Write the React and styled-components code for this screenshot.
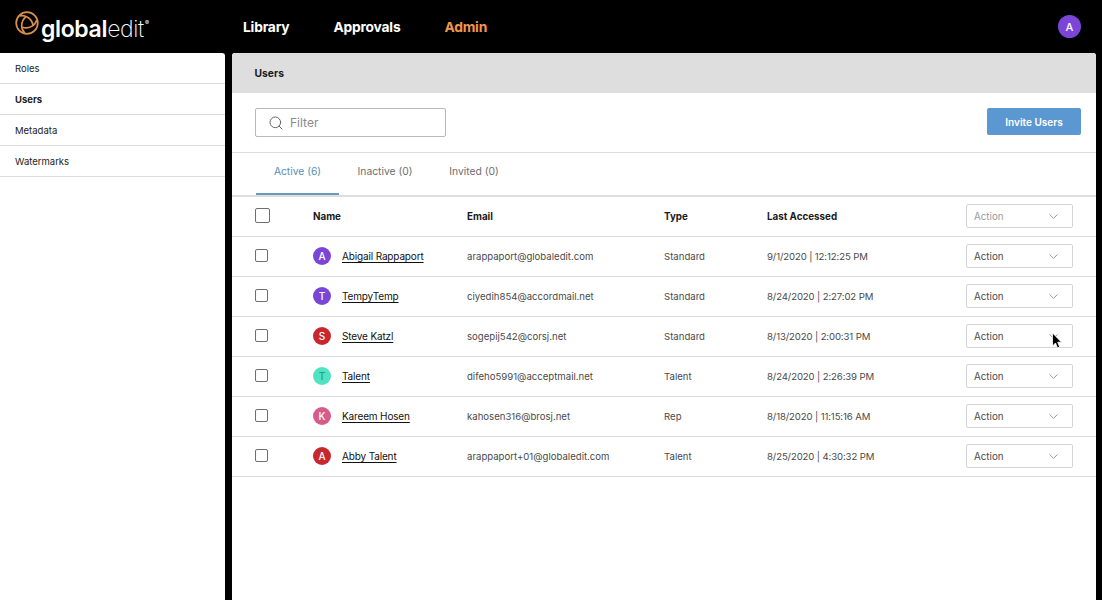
import React from 'react';
import styled, { createGlobalStyle } from 'styled-components';
import { Search, ChevronDown } from 'lucide-react';

const Global = createGlobalStyle`
  html, body { margin: 0; padding: 0; background: #000; height: 100%; overflow: hidden; }
  * { box-sizing: border-box; }
  body { font-family: Inter, "Liberation Sans", sans-serif; color: #1c1c1c; }
`;
const Page = styled.div`width: 1102px; height: 600px; display: flex; flex-direction: column; background: #000; position: relative; overflow: hidden;`;
const Header = styled.header`height: 53px; flex: none; display: flex; align-items: center; padding: 0 21px 0 15px;`;
const Logo = styled.div`width: 228px; flex: none; position: relative; height: 53px; display: flex; align-items: flex-end;`;
const LogoText = styled.div`
  font-family: Inter, sans-serif; font-size: 23px; color: #fff; letter-spacing: -0.35px; line-height: 1;
  margin: 0 0 12px 26px; font-weight: 600;
  span { font-weight: 200; }
  sup { font-size: 6px; font-weight: 400; vertical-align: 12px; line-height: 0; margin-left: 1px; }
`;
const LogoMark = styled.svg`position: absolute; left: 0; top: 11px;`;
const Nav = styled.nav`display: flex; gap: 44px; flex: 1; padding-top: 1px;`;
const NavItem = styled.a`font-size: 13.8px; font-weight: 700; letter-spacing: -0.2px; color: ${p => p.$active ? '#f0974f' : '#fff'};`;
const Avatar = styled.div`
  width: ${p => p.$size || 18}px; height: ${p => p.$size || 18}px; border-radius: 50%; background: ${p => p.$color};
  color: ${p => p.$text || '#fff'}; display: flex; align-items: center; justify-content: center; font-size: ${p => p.$fs || 10}px; font-weight: 500; flex: none;
`;
const Body = styled.div`flex: 1; display: flex; gap: 7px; min-height: 0; padding-right: 6px;`;
const Sidebar = styled.aside`width: 225px; flex: none; background: #fff; border-radius: 0 3px 0 0;`;
const SideItem = styled.div`
  height: 31px; padding: 0 15px; display: flex; align-items: center; border-bottom: 1px solid #dcdcdc;
  font-size: 9.5px; color: #222; font-weight: ${p => p.$active ? 700 : 400};
`;
const Main = styled.main`flex: 1; background: #fff; border-radius: 3px 3px 0 0; display: flex; flex-direction: column; overflow: hidden;`;
const TitleBar = styled.div`height: 40px; flex: none; background: #dedede; display: flex; align-items: center; padding: 0 22.5px; font-size: 10.3px; font-weight: 700; color: #1a1a1a;`;
const Toolbar = styled.div`height: 60px; flex: none; display: flex; align-items: flex-start; justify-content: space-between; padding: 15px 15px 0 23px; border-bottom: 1px solid #dcdcdc;`;
const FilterBox = styled.div`width: 191px; height: 29px; border: 1px solid #b9b9b9; border-radius: 2px; display: flex; align-items: center; gap: 6px; padding: 0 12px; font-size: 12px; color: #8a8a8a;`;
const InviteButton = styled.button`width: 94px; height: 27px; border: 0; border-radius: 2px; background: #5b97d0; color: #fff; font: 600 10px Inter, sans-serif; padding: 0;`;
const Tabs = styled.div`height: 44px; flex: none; display: flex; padding-left: 24px; border-bottom: 2px solid #dedede;`;
const Tab = styled.div`
  width: ${p => p.$w}px; height: 42px; display: flex; align-items: center; justify-content: center; padding-bottom: 4px;
  font-size: 10.3px; color: ${p => p.$active ? '#5a8db8' : '#6e6e6e'};
  border-bottom: 2px solid ${p => p.$active ? '#6b98bd' : 'transparent'};
`;
const Row = styled.div`
  height: 40px; flex: none; display: grid; grid-template-columns: 58px 154px 197px 103px 199px 107px; align-items: center;
  padding: 0 0 1px 23px; border-bottom: 1px solid #dcdcdc; font-size: 9.6px; color: #4a4a4a;
`;
const HeadCell = styled.div`font-size: 9.8px; font-weight: 700; color: #1a1a1a;`;
const DateCell = styled.div`letter-spacing: -0.12px;`;
const Check = styled.div`width: ${p => p.$size}px; height: ${p => p.$size}px; border: 1px solid #6f6f6f; border-radius: 2px; background: #fff; margin-top: -1px;`;
const NameCell = styled.div`display: flex; align-items: center; gap: 11px;`;
const NameLink = styled.a`font-size: 10px; color: #111; text-decoration: underline; text-underline-offset: 2px; letter-spacing: -0.15px;`;
const Select = styled.div`
  width: 107px; height: 24px; border: 1px solid #d4d4d4; border-radius: 2px; display: flex; align-items: center; justify-content: space-between;
  padding: 0 11px 0 7px; font-size: 9.8px; color: ${p => p.$head ? '#9a9a9a' : '#4a4a4a'};
`;
const Chevron = styled(ChevronDown)`color: #777;`;
const Cursor = styled.svg`position: absolute; left: 1051px; top: 332px; pointer-events: none;`;

const users = [
  ['A', '#7b46d8', 'Abigail Rappaport', 'arappaport@globaledit.com', 'Standard', '9/1/2020 | 12:12:25 PM'],
  ['T', '#7b46d8', 'TempyTemp', 'ciyedih854@accordmail.net', 'Standard', '8/24/2020 | 2:27:02 PM'],
  ['S', '#c9272e', 'Steve Katzl', 'sogepij542@corsj.net', 'Standard', '8/13/2020 | 2:00:31 PM'],
  ['T', '#4fe3c1', 'Talent', 'difeho5991@acceptmail.net', 'Talent', '8/24/2020 | 2:26:39 PM'],
  ['K', '#d85c8a', 'Kareem Hosen', 'kahosen316@brosj.net', 'Rep', '8/18/2020 | 11:15:16 AM'],
  ['A', '#c9272e', 'Abby Talent', 'arappaport+01@globaledit.com', 'Talent', '8/25/2020 | 4:30:32 PM'],
];

export default function App() {
  return (
    <Page>
      <Global />
      <Header>
        <Logo>
          <LogoMark width="24" height="24" viewBox="0 0 24 24" fill="none" stroke="#d98f4e" strokeWidth="1.7">
            <circle cx="12" cy="12" r="10.8" />
            <path d="M4.500 5C9.500 3.800 16.500 6.500 18 14" />
            <path d="M4.500 5C9.500 3.800 16.500 6.500 18 14" transform="rotate(120 12 12)" />
            <path d="M4.500 5C9.500 3.800 16.500 6.500 18 14" transform="rotate(240 12 12)" />
          </LogoMark>
          <LogoText>global<span>edit</span><sup>®</sup></LogoText>
        </Logo>
        <Nav>
          <NavItem>Library</NavItem>
          <NavItem>Approvals</NavItem>
          <NavItem $active>Admin</NavItem>
        </Nav>
        <Avatar $size={23} $color="#7b46d8" $fs={11}>A</Avatar>
      </Header>
      <Body>
        <Sidebar>
          <SideItem>Roles</SideItem>
          <SideItem $active>Users</SideItem>
          <SideItem>Metadata</SideItem>
          <SideItem>Watermarks</SideItem>
        </Sidebar>
        <Main>
          <TitleBar>Users</TitleBar>
          <Toolbar>
            <FilterBox><Search size={16} color="#666" strokeWidth={1.5} />Filter</FilterBox>
            <InviteButton>Invite Users</InviteButton>
          </Toolbar>
          <Tabs>
            <Tab $active $w={83}>Active (6)</Tab>
            <Tab $w={92}>Inactive (0)</Tab>
            <Tab $w={86}>Invited (0)</Tab>
          </Tabs>
          <Row>
            <Check $size={15} />
            <HeadCell>Name</HeadCell>
            <HeadCell>Email</HeadCell>
            <HeadCell>Type</HeadCell>
            <HeadCell>Last Accessed</HeadCell>
            <Select $head>Action<Chevron size={15} strokeWidth={1.2} /></Select>
          </Row>
          {users.map(u => (
            <Row key={u[3]}>
              <Check $size={13} />
              <NameCell>
                <Avatar $color={u[1]} $text={u[1] === '#4fe3c1' ? '#2a9c84' : '#fff'}>{u[0]}</Avatar>
                <NameLink>{u[2]}</NameLink>
              </NameCell>
              <div>{u[3]}</div>
              <div>{u[4]}</div>
              <DateCell>{u[5]}</DateCell>
              <Select>Action<Chevron size={15} strokeWidth={1.2} /></Select>
            </Row>
          ))}
        </Main>
      </Body>
      <Cursor width="12" height="18" viewBox="0 0 12 18">
        <path d="M1.500 1v13l3-3 2 5 2.200-1-2-4.800H10.500z" fill="#000" stroke="#fff" strokeWidth="0.8" />
      </Cursor>
    </Page>
  );
}
